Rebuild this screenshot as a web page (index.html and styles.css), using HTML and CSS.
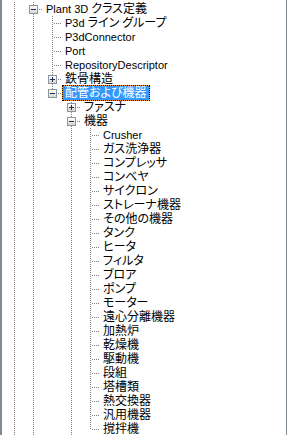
FILE: index.html
```html
<!DOCTYPE html>
<html lang="ja">
<head>
<meta charset="utf-8">
<link rel="stylesheet" href="styles.css">
</head>
<body>
<div class="tree">
  <div class="row"><span class="cell pipe"></span><span class="cell tee"><span class="box minus"></span></span><span class="label"><span class="en">Plant 3D </span>クラス定義</span></div>
  <div class="row"><span class="cell pipe"></span><span class="cell pipe"></span><span class="cell tee"></span><span class="label"><span class="en">P3d </span>ライン<span class="en"> </span>グループ</span></div>
  <div class="row"><span class="cell pipe"></span><span class="cell pipe"></span><span class="cell tee"></span><span class="label en">P3dConnector</span></div>
  <div class="row"><span class="cell pipe"></span><span class="cell pipe"></span><span class="cell tee"></span><span class="label en">Port</span></div>
  <div class="row"><span class="cell pipe"></span><span class="cell pipe"></span><span class="cell tee"></span><span class="label en">RepositoryDescriptor</span></div>
  <div class="row"><span class="cell pipe"></span><span class="cell pipe"></span><span class="cell tee"><span class="box plus"></span></span><span class="label">鉄骨構造</span></div>
  <div class="row"><span class="cell pipe"></span><span class="cell pipe"></span><span class="cell elbow"><span class="box minus"></span></span><span class="label selected">配管および機器</span></div>
  <div class="row"><span class="cell pipe"></span><span class="cell pipe"></span><span class="cell"></span><span class="cell tee"><span class="box plus"></span></span><span class="label">ファスナ</span></div>
  <div class="row"><span class="cell pipe"></span><span class="cell pipe"></span><span class="cell"></span><span class="cell tee"><span class="box minus"></span></span><span class="label">機器</span></div>
  <div class="row"><span class="cell pipe"></span><span class="cell pipe"></span><span class="cell"></span><span class="cell pipe"></span><span class="cell tee"></span><span class="label en">Crusher</span></div>
  <div class="row"><span class="cell pipe"></span><span class="cell pipe"></span><span class="cell"></span><span class="cell pipe"></span><span class="cell tee"></span><span class="label">ガス洗浄器</span></div>
  <div class="row"><span class="cell pipe"></span><span class="cell pipe"></span><span class="cell"></span><span class="cell pipe"></span><span class="cell tee"></span><span class="label">コンプレッサ</span></div>
  <div class="row"><span class="cell pipe"></span><span class="cell pipe"></span><span class="cell"></span><span class="cell pipe"></span><span class="cell tee"></span><span class="label">コンベヤ</span></div>
  <div class="row"><span class="cell pipe"></span><span class="cell pipe"></span><span class="cell"></span><span class="cell pipe"></span><span class="cell tee"></span><span class="label">サイクロン</span></div>
  <div class="row"><span class="cell pipe"></span><span class="cell pipe"></span><span class="cell"></span><span class="cell pipe"></span><span class="cell tee"></span><span class="label">ストレーナ機器</span></div>
  <div class="row"><span class="cell pipe"></span><span class="cell pipe"></span><span class="cell"></span><span class="cell pipe"></span><span class="cell tee"></span><span class="label">その他の機器</span></div>
  <div class="row"><span class="cell pipe"></span><span class="cell pipe"></span><span class="cell"></span><span class="cell pipe"></span><span class="cell tee"></span><span class="label">タンク</span></div>
  <div class="row"><span class="cell pipe"></span><span class="cell pipe"></span><span class="cell"></span><span class="cell pipe"></span><span class="cell tee"></span><span class="label">ヒータ</span></div>
  <div class="row"><span class="cell pipe"></span><span class="cell pipe"></span><span class="cell"></span><span class="cell pipe"></span><span class="cell tee"></span><span class="label">フィルタ</span></div>
  <div class="row"><span class="cell pipe"></span><span class="cell pipe"></span><span class="cell"></span><span class="cell pipe"></span><span class="cell tee"></span><span class="label">ブロア</span></div>
  <div class="row"><span class="cell pipe"></span><span class="cell pipe"></span><span class="cell"></span><span class="cell pipe"></span><span class="cell tee"></span><span class="label">ポンプ</span></div>
  <div class="row"><span class="cell pipe"></span><span class="cell pipe"></span><span class="cell"></span><span class="cell pipe"></span><span class="cell tee"></span><span class="label">モーター</span></div>
  <div class="row"><span class="cell pipe"></span><span class="cell pipe"></span><span class="cell"></span><span class="cell pipe"></span><span class="cell tee"></span><span class="label">遠心分離機器</span></div>
  <div class="row"><span class="cell pipe"></span><span class="cell pipe"></span><span class="cell"></span><span class="cell pipe"></span><span class="cell tee"></span><span class="label">加熱炉</span></div>
  <div class="row"><span class="cell pipe"></span><span class="cell pipe"></span><span class="cell"></span><span class="cell pipe"></span><span class="cell tee"></span><span class="label">乾燥機</span></div>
  <div class="row"><span class="cell pipe"></span><span class="cell pipe"></span><span class="cell"></span><span class="cell pipe"></span><span class="cell tee"></span><span class="label">駆動機</span></div>
  <div class="row"><span class="cell pipe"></span><span class="cell pipe"></span><span class="cell"></span><span class="cell pipe"></span><span class="cell tee"></span><span class="label">段組</span></div>
  <div class="row"><span class="cell pipe"></span><span class="cell pipe"></span><span class="cell"></span><span class="cell pipe"></span><span class="cell tee"></span><span class="label">塔槽類</span></div>
  <div class="row"><span class="cell pipe"></span><span class="cell pipe"></span><span class="cell"></span><span class="cell pipe"></span><span class="cell tee"></span><span class="label">熱交換器</span></div>
  <div class="row"><span class="cell pipe"></span><span class="cell pipe"></span><span class="cell"></span><span class="cell pipe"></span><span class="cell tee"></span><span class="label">汎用機器</span></div>
  <div class="row"><span class="cell pipe"></span><span class="cell pipe"></span><span class="cell"></span><span class="cell pipe"></span><span class="cell elbow"></span><span class="label">撹拌機</span></div>
  <div class="row"><span class="cell pipe"></span><span class="cell pipe"></span><span class="cell"></span><span class="cell pipe"></span></div>
</div>
</body>
</html>
```
FILE: styles.css
```css
html, body {
  margin: 0;
  padding: 0;
  background: #ffffff;
}
body {
  width: 287px;
  height: 435px;
  overflow: hidden;
}
.tree {
  box-sizing: border-box;
  width: 287px;
  height: 435px;
  border-left: 2px solid #7f8a95;
  border-right: 1px solid #7f8a95;
  padding: 2px 0 0 3px;
  overflow: hidden;
  font-family: "Liberation Sans", "Noto Sans CJK JP", sans-serif;
  font-size: 12px;
  font-feature-settings: "palt" 1;
  color: #000;
  display: flex;
  flex-direction: column;
}
.row {
  display: flex;
  height: 14px;
  flex: none;
  align-items: center;
}
.cell {
  flex: none;
  width: 19px;
  height: 14px;
  position: relative;
  box-sizing: border-box;
  padding: 3px 0 0 5px;
}
.pipe::before,
.tee::before,
.elbow::before {
  content: "";
  position: absolute;
  left: 9px;
  top: 0;
  width: 1px;
  height: 14px;
  background: linear-gradient(#808080 50%, transparent 50%) 0 0 / 1px 2px repeat-y;
}
.elbow::before {
  height: 8px;
}
.tee::after,
.elbow::after {
  content: "";
  position: absolute;
  left: 11px;
  right: 0;
  top: 7px;
  height: 1px;
  background: linear-gradient(to right, #808080 50%, transparent 50%) 0 0 / 2px 1px repeat-x;
}
.box {
  display: block;
  position: relative;
  z-index: 1;
  box-sizing: border-box;
  width: 9px;
  height: 9px;
  border: 1px solid #8c959e;
  background: linear-gradient(#ffffff, #d6d6ce);
}
.box::before {
  content: "";
  position: absolute;
  left: 1px;
  top: 3px;
  width: 5px;
  height: 1px;
  background: #1e2d5a;
}
.plus::after {
  content: "";
  position: absolute;
  left: 3px;
  top: 1px;
  width: 1px;
  height: 5px;
  background: #1e2d5a;
}
.label {
  flex: none;
  margin-left: 2px;
  padding: 0 1px;
  line-height: 14px;
  white-space: nowrap;
}
.en {
  font-size: 11px;
}
.selected {
  box-sizing: border-box;
  height: 16px;
  line-height: 14px;
  margin-left: 0;
  padding: 0 2px;
  color: #fff;
  border: 1px dotted #000;
  background: linear-gradient(#3399ff, #3399ff) padding-box, #ff9a1f;
}
```
